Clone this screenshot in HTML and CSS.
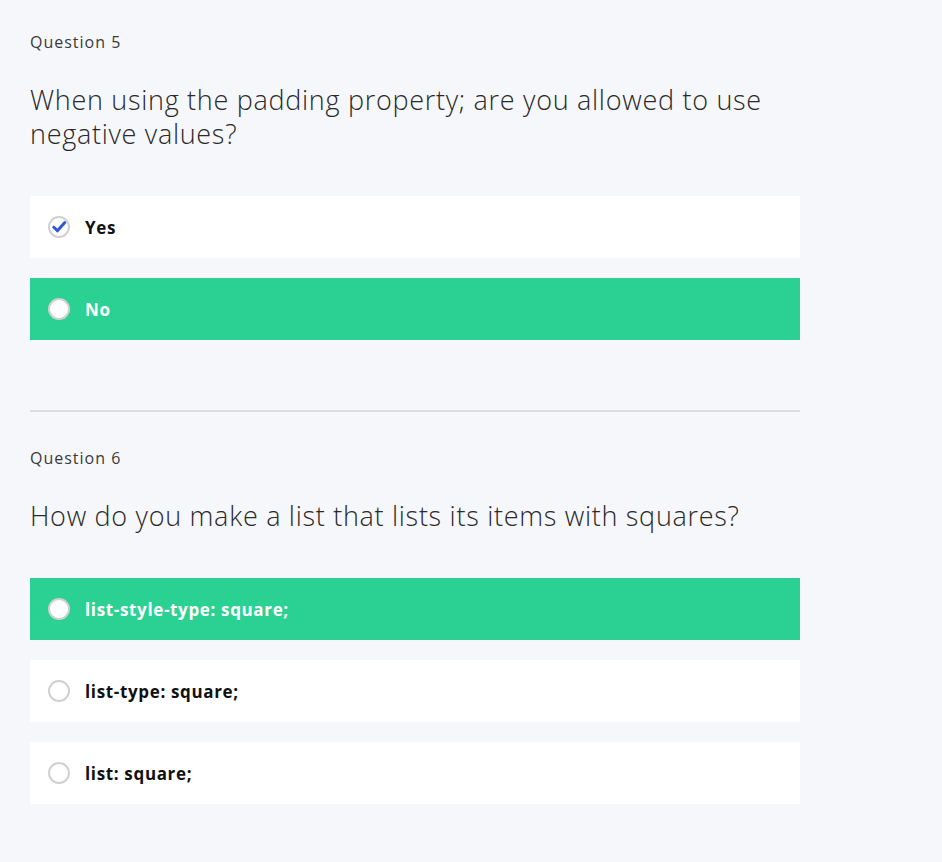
FILE: index.html
```html
<!DOCTYPE html>
<html>
<head>
<meta charset="utf-8">
<link rel="stylesheet" href="styles.css">
</head>
<body>
<main class="quiz">
  <section class="question">
    <div class="q-label">Question 5</div>
    <h2 class="q-text">When using the padding property; are you allowed to use negative values?</h2>
    <ul class="options">
      <li class="option">
        <span class="mark">
          <svg width="22" height="22" viewBox="0 0 22 22"><circle cx="11" cy="11" r="10" fill="#fff" stroke="#d0d0d0" stroke-width="2"/><path d="M5.8 11.2 L9.4 14.8 L16.8 6.6" fill="none" stroke="#3358d4" stroke-width="3" stroke-linecap="round" stroke-linejoin="round"/></svg>
        </span>
        <span class="opt-text">Yes</span>
      </li>
      <li class="option selected">
        <span class="radio"></span>
        <span class="opt-text">No</span>
      </li>
    </ul>
  </section>
  <hr class="divider">
  <section class="question">
    <div class="q-label">Question 6</div>
    <h2 class="q-text">How do you make a list that lists its items with squares?</h2>
    <ul class="options">
      <li class="option selected">
        <span class="radio"></span>
        <span class="opt-text">list-style-type: square;</span>
      </li>
      <li class="option">
        <span class="radio"></span>
        <span class="opt-text">list-type: square;</span>
      </li>
      <li class="option">
        <span class="radio"></span>
        <span class="opt-text">list: square;</span>
      </li>
    </ul>
  </section>
</main>
</body>
</html>
```
FILE: styles.css
```css
html, body {
  margin: 0;
  padding: 0;
  background: #f6f7fb;
}
body {
  font-family: "Open Sans", "DejaVu Sans", sans-serif;
  color: #222;
}
.quiz {
  width: 770px;
  padding: 32px 30px 40px;
}
.question {
  display: flex;
  flex-direction: column;
}
.q-label {
  font-size: 16px;
  line-height: 20px;
  letter-spacing: 1px;
  color: #3a3a3a;
}
.q-text {
  margin: 31px 0 0;
  font-size: 27px;
  line-height: 34px;
  font-weight: 300;
  letter-spacing: 0.7px;
  color: #2a2a2a;
}
.options {
  list-style: none;
  margin: 45px 0 0;
  padding: 0;
  display: flex;
  flex-direction: column;
  gap: 20px;
}
.option {
  height: 62px;
  background: #fff;
  display: flex;
  align-items: center;
  padding-left: 18px;
  gap: 15px;
}
.option.selected {
  background: #2bd193;
}
.option.selected .opt-text {
  color: #fff;
}
.mark {
  display: flex;
  width: 22px;
  height: 22px;
}
.radio {
  box-sizing: border-box;
  width: 22px;
  height: 22px;
  border-radius: 50%;
  border: 2px solid #d0d0d0;
  background: #fff;
}
.opt-text {
  font-size: 17px;
  font-weight: 700;
  letter-spacing: 0.65px;
  color: #111;
}
.divider {
  border: 0;
  height: 2px;
  background: #dcdde0;
  margin: 70px 0 36px;
}
```
